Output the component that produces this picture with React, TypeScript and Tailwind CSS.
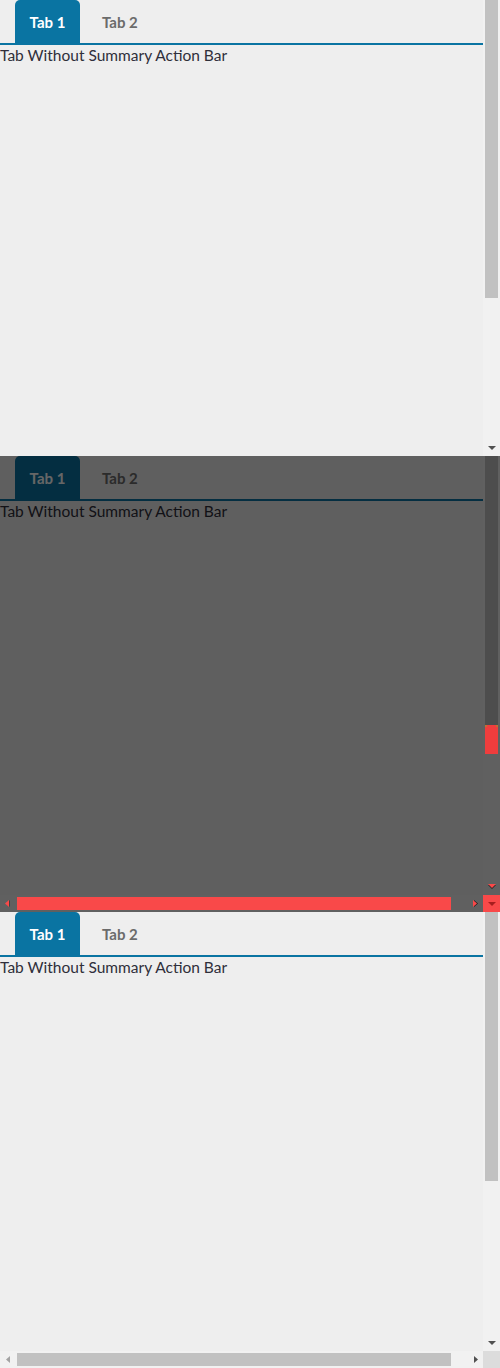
import React from "react";

const font = { fontFamily: "Lato, 'Open Sans', sans-serif" };

function DownArrow({ color }: { color: string }) {
  return (
    <svg width="8" height="4" viewBox="0 0 8 4" className="block">
      <polygon points="0,0 8,0 4,4" fill={color} />
    </svg>
  );
}
function LeftArrow({ color }: { color: string }) {
  return (
    <svg width="4" height="7" viewBox="0 0 4 7" className="block">
      <polygon points="4,0 4,7 0,3.5" fill={color} />
    </svg>
  );
}
function RightArrow({ color }: { color: string }) {
  return (
    <svg width="4" height="7" viewBox="0 0 4 7" className="block">
      <polygon points="0,0 0,7 4,3.5" fill={color} />
    </svg>
  );
}

function Tabs() {
  return (
    <div className="flex flex-col">
      <div className="flex h-[43px] items-stretch pl-[15px]">
        <div className="flex w-[65px] items-center justify-center rounded-t-[5px] bg-[#0a74a2] pt-[2px] text-[15px] font-bold text-white">
          Tab 1
        </div>
        <div className="flex items-center pl-[22px] pt-[2px] text-[15px] font-bold text-[#6b6b6b]">
          Tab 2
        </div>
      </div>
      <div className="h-[2px] bg-[#0a74a2]" />
      <div className="text-[15.5px] leading-[21px] text-[#2f2f3a]">
        Tab Without Summary Action Bar
      </div>
    </div>
  );
}

function Panel({
  thumb,
  hScroll,
  overlay,
}: {
  thumb: number;
  hScroll: boolean;
  overlay?: boolean;
}) {
  return (
    <div className="relative flex h-[456px] flex-col overflow-hidden bg-[#eeeeee]" style={font}>
      <div className="flex min-h-0 flex-1">
        <div className="min-w-0 flex-1">
          <Tabs />
        </div>
        <div className="flex w-[17px] flex-col bg-[#f1f1f1]">
          <div className="mx-[2px] bg-[#c1c1c1]" style={{ height: thumb }} />
          <div className="flex-1" />
          <div className="flex h-[17px] items-center justify-center">
            <DownArrow color="#505050" />
          </div>
        </div>
      </div>
      {hScroll && (
        <div className="flex h-[17px]">
          <div className="flex flex-1 items-center bg-[#f1f1f1]">
            <div className="flex h-[17px] w-[17px] items-center justify-center pr-[2px]">
              <LeftArrow color="#a3a3a3" />
            </div>
            <div className="h-[13px] w-[434px] bg-[#c1c1c1]" />
            <div className="flex-1" />
            <div className="flex h-[17px] w-[17px] items-center justify-center pl-[2px]">
              <RightArrow color="#505050" />
            </div>
          </div>
          <div className="w-[17px] bg-[#dcdcdc]" />
        </div>
      )}
      {overlay && (
        <>
          <div className="absolute inset-0 bg-black/60" />
          <div className="absolute left-[485px] top-[269px] h-[29px] w-[13px] bg-[#ef3d3d]">
            <div className="absolute left-0 top-0 h-[2px] w-[2px] bg-[#c07030]" />
            <div className="absolute right-0 top-0 h-[2px] w-[2px] bg-[#c07030]" />
          </div>
          <div className="absolute left-[488px] top-[428px]">
            <DownArrow color="#f94949" />
          </div>
          <div className="absolute left-[17px] top-[441px] h-[13px] w-[434px] bg-[#f94949]" />
          <div className="absolute left-[5px] top-[444px]">
            <LeftArrow color="#f94949" />
          </div>
          <div className="absolute left-[473px] top-[444px]">
            <RightArrow color="#f94949" />
          </div>
          <div className="absolute left-[483px] top-[439px] flex h-[17px] w-[17px] items-center justify-center bg-[#f94949]">
            <DownArrow color="#a81e1e" />
          </div>
        </>
      )}
    </div>
  );
}

export default function App() {
  return (
    <div className="w-[500px]">
      <Panel thumb={298} hScroll={false} />
      <Panel thumb={269} hScroll={true} overlay />
      <Panel thumb={269} hScroll={true} />
    </div>
  );
}
